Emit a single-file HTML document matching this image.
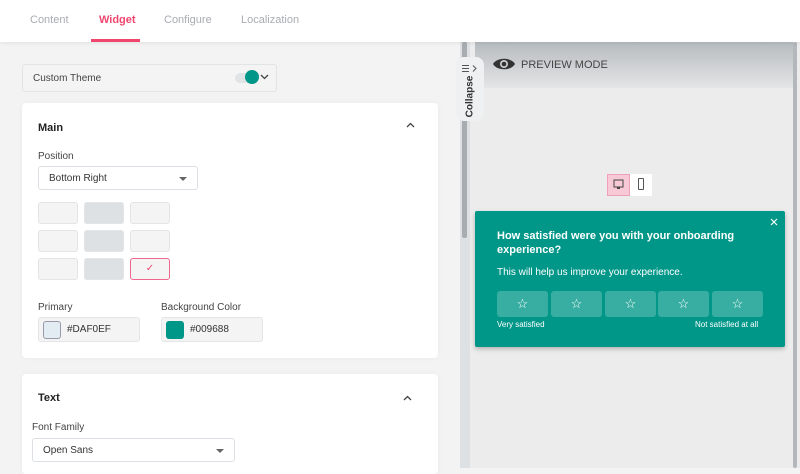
<!DOCTYPE html>
<html><head><meta charset="utf-8"><style>
*{box-sizing:border-box;margin:0;padding:0}
body{width:800px;height:468px;overflow:hidden;font-family:"Liberation Sans",sans-serif;background:#f3f3f3;position:relative}
.abs{position:absolute}
.tab{position:absolute;top:14px;font-size:11px;color:#a9acb2}
.card{position:absolute;background:#fff;border-radius:4px;box-shadow:0 0 6px rgba(0,0,0,.04)}
.lbl{position:absolute;font-size:10px;color:#444}
.sel{position:absolute;background:#fff;border:1px solid #dcdfe3;border-radius:3px;font-size:10px;color:#333;padding-left:10px;display:flex;align-items:center}
.sel:after{content:"";position:absolute;right:10px;top:10px;border:4px solid transparent;border-top:4px solid #666;border-bottom:0}
.g{position:absolute;width:40px;height:22px;border:1px solid #e2e4e6;border-radius:3px;background:#f4f4f4}
.g.d{background:#dde1e3}
.col{position:absolute;background:#f4f4f4;border:1px solid #e3e5e8;border-radius:3px;font-size:10px;color:#333;display:flex;align-items:center;padding-left:28px}
.sw{position:absolute;left:4px;top:3px;width:18px;height:18px;border-radius:3px}
.star{position:absolute;top:291px;width:51px;height:26px;background:rgba(255,255,255,.22);border-radius:3px;color:#fff;font-size:13px;text-align:center;line-height:26px}
</style></head><body>
<div class="abs" style="left:0;top:0;width:800px;height:42px;background:#fff;box-shadow:0 1px 4px rgba(0,0,0,.08);z-index:2">
<div class="tab" style="left:30px">Content</div>
<div class="tab" style="left:99px;color:#f0466e;font-weight:bold">Widget</div>
<div class="tab" style="left:164px">Configure</div>
<div class="tab" style="left:241px">Localization</div>
<div class="abs" style="left:91px;top:39px;width:49px;height:3px;background:#f0466e"></div>
</div>
<div class="abs" style="left:22px;top:64px;width:255px;height:28px;background:#f4f4f4;border:1px solid #e1e3e6;border-radius:3px;font-size:10px;color:#444;padding:8px 0 0 10px">Custom Theme
<div class="abs" style="left:212px;top:8px;width:20px;height:10px;border-radius:5px;background:#e0e4e6"></div>
<div class="abs" style="left:222px;top:5px;width:14px;height:14px;border-radius:7px;background:#009688"></div>
<svg class="abs" style="left:237px;top:9px" width="9" height="6"><path d="M1 1L4.5 4.5L8 1" fill="none" stroke="#444" stroke-width="1.3"/></svg>
</div>
<div class="card" style="left:22px;top:103px;width:416px;height:255px">
<div class="abs" style="left:16px;top:19px;font-size:11px;font-weight:bold;color:#222">Main</div>
<svg class="abs" style="left:384px;top:19px" width="9" height="6"><path d="M1 5L4.5 1.5L8 5" fill="none" stroke="#444" stroke-width="1.3"/></svg>
<div class="lbl" style="left:16px;top:48px">Position</div>
<div class="sel" style="left:16px;top:63px;width:160px;height:24px">Bottom Right</div>
<div class="g" style="left:16px;top:99px"></div><div class="g d" style="left:62px;top:99px"></div><div class="g" style="left:108px;top:99px"></div>
<div class="g" style="left:16px;top:127px"></div><div class="g d" style="left:62px;top:127px"></div><div class="g" style="left:108px;top:127px"></div>
<div class="g" style="left:16px;top:155px"></div><div class="g d" style="left:62px;top:155px"></div><div class="g" style="left:108px;top:155px;border-color:#f0668e;color:#f0466e;font-size:10px;text-align:center;line-height:20px">&#10003;</div>
<div class="lbl" style="left:16px;top:199px">Primary</div>
<div class="lbl" style="left:139px;top:199px">Background Color</div>
<div class="col" style="left:16px;top:214px;width:102px;height:25px"><div class="sw" style="background:#e3ecf2;border:1px solid #99a"></div>#DAF0EF</div>
<div class="col" style="left:139px;top:214px;width:102px;height:25px"><div class="sw" style="background:#009688"></div>#009688</div>
</div>
<div class="card" style="left:22px;top:374px;width:416px;height:100px">
<div class="abs" style="left:16px;top:18px;font-size:11px;font-weight:bold;color:#222">Text</div>
<svg class="abs" style="left:381px;top:21px" width="9" height="6"><path d="M1 5L4.5 1.5L8 5" fill="none" stroke="#444" stroke-width="1.3"/></svg>
<div class="lbl" style="left:10px;top:48px">Font Family</div>
<div class="sel" style="left:10px;top:64px;width:203px;height:24px">Open Sans</div>
</div>
<div class="abs" style="left:460px;top:42px;width:10px;height:426px;background:#dde1e4"></div>
<div class="abs" style="left:462px;top:42px;width:5px;height:196px;background:#a9adb2;border-radius:2px"></div>
<div class="abs" style="left:470px;top:42px;width:330px;height:426px;background:#ececec"></div>
<div class="abs" style="left:475px;top:42px;width:318px;height:46px;background:linear-gradient(#b6bbbf,#e4e5e6);"></div>
<svg class="abs" style="left:492px;top:56px" width="24" height="16" viewBox="0 0 24 16"><path d="M1 8C5 1 19 1 23 8C19 15 5 15 1 8Z" fill="#333"/><circle cx="12" cy="8" r="4" fill="#ccc"/><circle cx="12" cy="8" r="2.3" fill="#333"/></svg>
<div class="abs" style="left:521px;top:59px;font-size:11px;color:#444">PREVIEW MODE</div>
<div class="abs" style="left:793px;top:42px;width:4px;height:426px;background:#b4b8bc;border-radius:2px"></div>
<div class="abs" style="left:456px;top:57px;width:28px;height:64px;background:#eef0f1;border-radius:8px;z-index:3">
<svg class="abs" style="left:5px;top:7px" width="18" height="9"><path d="M1 1.5H8M1 4.5H8M1 7.5H8" stroke="#555" stroke-width="1"/><path d="M12 1.5L15 4.5L12 7.5" fill="none" stroke="#555" stroke-width="1"/></svg>
<div class="abs" style="left:-10px;top:34px;width:48px;text-align:center;transform:rotate(-90deg);font-size:10px;color:#333;font-weight:bold">Collapse</div>
</div>
<div class="abs" style="left:607px;top:174px;width:23px;height:22px;background:#f7c9d6;border:1px solid #f0a0b8"></div>
<svg class="abs" style="left:613px;top:179px" width="11" height="11"><rect x="1" y="1" width="9" height="7" fill="none" stroke="#444"/><rect x="4" y="8" width="3" height="2" fill="#444"/></svg>
<div class="abs" style="left:630px;top:174px;width:22px;height:22px;background:#fff"></div>
<div class="abs" style="left:638px;top:178px;width:6px;height:12px;border:1px solid #555;border-radius:1px"></div>
<div class="abs" style="left:475px;top:211px;width:310px;height:136px;background:#009688;border-radius:2px;box-shadow:0 2px 5px rgba(0,0,0,.25)">
<svg class="abs" style="left:295px;top:7px" width="8" height="8"><path d="M1 1L7 7M7 1L1 7" stroke="#fff" stroke-width="1.2"/></svg>
<div class="abs" style="left:22px;top:18px;width:260px;color:#fff;font-size:11px;font-weight:bold;line-height:14px">How satisfied were you with your onboarding experience?</div>
<div class="abs" style="left:22px;top:56px;color:#fff;font-size:10px">This will help us improve your experience.</div>
<div class="abs" style="left:22px;top:109px;color:#fff;font-size:8px">Very satisfied</div>
<div class="abs" style="left:220px;top:109px;color:#fff;font-size:8px">Not satisfied at all</div>
</div>
<div class="star" style="left:497px">&#9734;</div><div class="star" style="left:551px">&#9734;</div><div class="star" style="left:605px">&#9734;</div><div class="star" style="left:658px">&#9734;</div><div class="star" style="left:712px">&#9734;</div>
</body></html>
